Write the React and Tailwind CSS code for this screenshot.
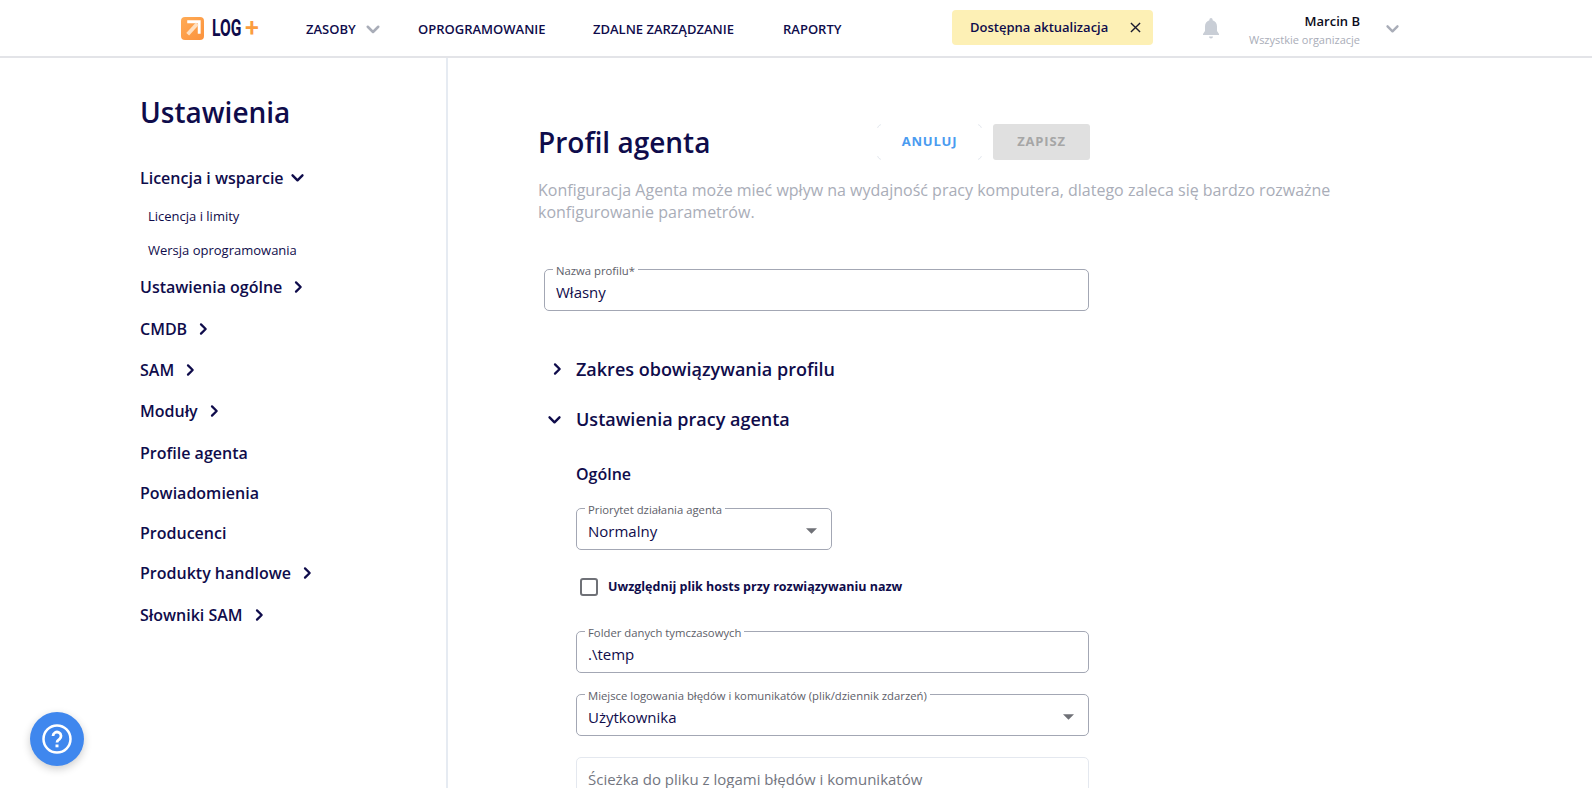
import React from "react";

const Chev = ({ d = "right", className = "" }) => (
  <svg viewBox="0 0 24 24" className={className} fill="none" stroke="currentColor" strokeWidth="3.400" strokeLinecap="round" strokeLinejoin="round">
    {d === "right" ? <path d="M9 5l7 7-7 7" /> : <path d="M5 9l7 7 7-7" />}
  </svg>
);

const Caret = () => (
  <svg viewBox="0 0 12 6" className="w-[11px] h-[6px] text-[#6f7177]" fill="currentColor"><path d="M0 0h12L6 6z" /></svg>
);

const Field = ({ label, value, select, className = "" }) => (
  <div className={`relative h-[42px] rounded-[5px] border border-[#a3a7b4] flex items-center justify-between pl-[11px] pr-[14px] pt-[3px] ${className}`}>
    <span className="absolute -top-[6px] left-[8px] bg-white px-[3px] text-[11.300px] leading-[14px] text-[#5d6069] whitespace-nowrap">{label}</span>
    <span className="text-[15px] leading-[22px] text-[#0f0c4b]">{value}</span>
    {select && <Caret />}
  </div>
);

const Item = ({ children, chev, down, className = "" }) => (
  <div className={`h-[41px] flex items-center text-[16px] font-semibold text-[#0f0c4b] shrink-0 ${className}`}>
    <span>{children}</span>
    {chev && <Chev d={down ? "down" : "right"} className={down ? "w-[17px] h-[17px] ml-[5px]" : "w-[16px] h-[16px] ml-[8px]"} />}
  </div>
);

const Sub = ({ children }) => (
  <div className="h-[34px] flex items-center pl-[8px] pt-[4px] text-[13px] text-[#0f0c4b]">{children}</div>
);

const NavLink = ({ children, className = "" }) => (
  <span className={`text-[13px] font-semibold text-[#0f0c4b] uppercase whitespace-nowrap ${className}`}>{children}</span>
);

export default function App() {
  return (
    <div className="h-screen overflow-hidden bg-white flex flex-col font-['Open_Sans',sans-serif]">
      <header className="h-[58px] shrink-0 border-b-2 border-[#e3e4e8] flex items-center pl-[181px]">
        <div className="w-[125px] flex items-center shrink-0">
          <div className="w-[23px] h-[23px] rounded-[4px] bg-gradient-to-br from-[#ffab55] to-[#fb923c] flex items-center justify-center">
            <svg viewBox="0 0 24 24" className="w-[23px] h-[23px]" fill="none">
              <path d="M19 5H8M19 5v11" stroke="#ffffff" strokeWidth="3" strokeLinecap="square" />
              <path d="M17 7L7 18" stroke="#ffe0c0" strokeWidth="4" />
            </svg>
          </div>
          <span className="ml-[8px] w-[29px] text-[24px] leading-[24px] font-bold text-[#0f0c4b] font-['Roboto',sans-serif] scale-x-[0.65] origin-left inline-block">LOG</span>
          <span className="ml-[4px] text-[25px] leading-[24px] font-medium text-[#fb9d3f] font-['Roboto',sans-serif]">+</span>
        </div>
        <div className="w-[112px] mt-[3px] flex items-center shrink-0">
          <NavLink>Zasoby</NavLink>
          <Chev d="down" className="w-[18px] h-[18px] ml-[8px] text-[#a9adb8] -mt-[2px]" />
        </div>
        <NavLink className="w-[175px] shrink-0 mt-[3px]">Oprogramowanie</NavLink>
        <NavLink className="w-[190px] shrink-0 mt-[3px]">Zdalne zarządzanie</NavLink>
        <NavLink className="w-[169px] shrink-0 mt-[3px]">Raporty</NavLink>
        <div className="w-[201px] h-[35px] mb-[1px] shrink-0 rounded-[4px] bg-[#fdf0b5] flex items-center justify-between pl-[18px] pr-[12px]">
          <span className="text-[13px] font-semibold text-[#0f0c4b]">Dostępna aktualizacja</span>
          <svg viewBox="0 0 12 12" className="w-[11px] h-[11px]" fill="none" stroke="#1a1a2e" strokeWidth="1.500"><path d="M1 1l10 10M11 1L1 11" /></svg>
        </div>
        <svg viewBox="0 0 24 24" className="w-[24px] h-[24px] ml-[46px] shrink-0" fill="#c9ced6">
          <path d="M12 2a1.600 1.600 0 0 0-1.600 1.600v.6C7.600 5 6 7.400 6 10.200V15l-2 3v1h16v-1l-2-3v-4.800c0-2.800-1.600-5.200-4.400-6v-.6A1.600 1.600 0 0 0 12 2z" />
          <path d="M10 20.500a2 2 0 0 0 4 0z" />
        </svg>
        <div className="w-[137px] mt-[3px] shrink-0 flex flex-col items-end">
          <span className="text-[13px] leading-[18px] font-semibold text-[#0c0c20]">Marcin B</span>
          <span className="text-[11px] leading-[17px] mt-[1px] text-[#a9adb8] whitespace-nowrap">Wszystkie organizacje</span>
        </div>
        <Chev d="down" className="w-[17px] h-[17px] ml-[24px] text-[#a9adb8] shrink-0" />
      </header>

      <div className="flex-1 flex min-h-0">
        <aside className="w-[448px] shrink-0 border-r-2 border-[#e6ebf2] pl-[140px] flex flex-col">
          <h2 className="mt-[34px] h-[40px] flex items-center text-[28px] font-semibold text-[#0f0c4b]">Ustawienia</h2>
          <div className="mt-[25px] flex flex-col">
            <Item chev down>Licencja i wsparcie</Item>
            <Sub>Licencja i limity</Sub>
            <Sub>Wersja oprogramowania</Sub>
            <Item chev>Ustawienia ogólne</Item>
            <Item chev className="mt-[1px]">CMDB</Item>
            <Item chev>SAM</Item>
            <Item chev>Moduły</Item>
            <Item className="mt-[1px]">Profile agenta</Item>
            <Item className="-mt-[1px]">Powiadomienia</Item>
            <Item className="-mt-[1px]">Producenci</Item>
            <Item chev className="-mt-[1px]">Produkty handlowe</Item>
            <Item chev className="mt-[1px]">Słowniki SAM</Item>
          </div>
        </aside>

        <main className="flex-1 pl-[90px] min-w-0">
          <div className="mt-[66px] h-[36px] flex items-center">
            <h1 className="w-[339px] shrink-0 text-[28px] font-semibold text-[#0f0c4b] whitespace-nowrap">Profil agenta</h1>
            <button className="relative w-[105px] h-[36px] rounded-[5px] border border-[#e4e8ef] text-[13px] font-bold tracking-[0.8px] text-[#4a9bf0] bg-white before:absolute before:inset-x-[3px] before:-inset-y-px before:bg-white after:absolute after:inset-y-[3px] after:-inset-x-px after:bg-white">
              <span className="relative z-10">ANULUJ</span>
            </button>
            <button className="ml-[11px] w-[97px] h-[36px] rounded-[3px] text-[13px] font-bold tracking-[0.8px] text-[#a6a6a6] bg-[#e0e0e0]">ZAPISZ</button>
          </div>
          <p className="mt-[19px] w-[830px] text-[16px] leading-[22px] text-[#a9adb8]">Konfiguracja Agenta może mieć wpływ na wydajność pracy komputera, dlatego zaleca się bardzo rozważne konfigurowanie parametrów.</p>

          <Field className="mt-[46px] ml-[6px] w-[545px]" label="Nazwa profilu*" value="Własny" />

          <div className="mt-[44px] h-[28px] flex items-center text-[18px] font-semibold text-[#0f0c4b]">
            <Chev className="w-[16px] h-[16px] ml-[11px] mr-[11px]" />
            <span>Zakres obowiązywania profilu</span>
          </div>
          <div className="mt-[22px] h-[28px] flex items-center text-[18px] font-semibold text-[#0f0c4b]">
            <Chev d="down" className="w-[17px] h-[17px] ml-[8px] mr-[13px]" />
            <span>Ustawienia pracy agenta</span>
          </div>

          <div className="pl-[38px]">
            <h3 className="mt-[29px] h-[24px] flex items-center text-[16px] font-semibold text-[#0f0c4b]">Ogólne</h3>
            <Field className="mt-[22px] w-[256px]" label="Priorytet działania agenta" value="Normalny" select />
            <label className="mt-[28px] h-[18px] flex items-center">
              <span className="ml-[4px] w-[18px] h-[18px] rounded-[3px] border-2 border-[#6f7177] shrink-0" />
              <span className="ml-[10px] text-[12.500px] font-bold text-[#0f0c4b]">Uwzględnij plik hosts przy rozwiązywaniu nazw</span>
            </label>
            <Field className="mt-[35px] w-[513px]" label="Folder danych tymczasowych" value=".\temp" />
            <Field className="mt-[21px] w-[513px]" label="Miejsce logowania błędów i komunikatów (plik/dziennik zdarzeń)" value="Użytkownika" select />
            <div className="mt-[21px] w-[513px] h-[50px] rounded-[5px] border border-[#e4e8ef] pl-[11px] pt-[10px] text-[15px] leading-[22px] text-[#73767f]">Ścieżka do pliku z logami błędów i komunikatów</div>
          </div>
        </main>
      </div>

      <button className="fixed left-[30px] top-[712px] w-[54px] h-[54px] rounded-full bg-[#3f87ee] shadow-[0_3px_8px_rgba(0,0,0,0.2)] flex items-center justify-center">
        <svg viewBox="0 0 30 30" className="w-[30px] h-[30px]" fill="none" stroke="#fff" strokeWidth="2.500">
          <circle cx="15" cy="15" r="13.500" />
          <path d="M11 12a4 4 0 1 1 6.300 3.300c-1.300.9-2.300 1.500-2.300 3.200" strokeWidth="2.800" />
          <path d="M15 20.500v2.800" strokeWidth="3" />
        </svg>
      </button>
    </div>
  );
}
